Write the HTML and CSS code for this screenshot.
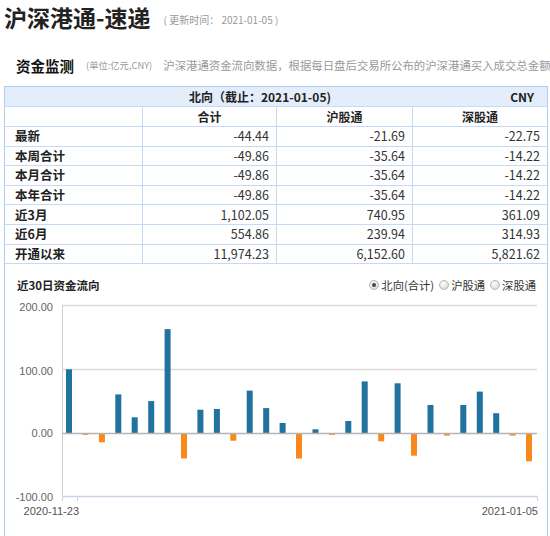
FILE: index.html
```html
<!DOCTYPE html>
<html lang="zh-CN">
<head>
<meta charset="utf-8">
<title>沪深港通-速递</title>
<link rel="stylesheet" href="styles.css">
</head>
<body>
<div class="top">
  <h1 class="title">沪深港通-速递</h1>
  <span class="upd">( 更新时间： 2021-01-05 )</span>
</div>
<div class="sub">
  <span class="sub-title">资金监测</span>
  <span class="unit">(单位:亿元,CNY)</span>
  <span class="desc">沪深港通资金流向数据，根据每日盘后交易所公布的沪深港通买入成交总金额</span>
</div>
<div class="panel">
  <table class="grid">
    <colgroup><col class="c1"><col class="c2"><col class="c3"><col class="c4"></colgroup>
    <tr class="hd1"><th colspan="3" class="north">北向（截止：2021-01-05)</th><th class="cny">CNY</th></tr>
    <tr class="hd2"><th></th><th>合计</th><th>沪股通</th><th>深股通</th></tr>
    <tr><td class="lab">最新</td><td>-44.44</td><td>-21.69</td><td>-22.75</td></tr>
    <tr><td class="lab">本周合计</td><td>-49.86</td><td>-35.64</td><td>-14.22</td></tr>
    <tr><td class="lab">本月合计</td><td>-49.86</td><td>-35.64</td><td>-14.22</td></tr>
    <tr><td class="lab">本年合计</td><td>-49.86</td><td>-35.64</td><td>-14.22</td></tr>
    <tr><td class="lab">近3月</td><td>1,102.05</td><td>740.95</td><td>361.09</td></tr>
    <tr><td class="lab">近6月</td><td>554.86</td><td>239.94</td><td>314.93</td></tr>
    <tr><td class="lab">开通以来</td><td>11,974.23</td><td>6,152.60</td><td>5,821.62</td></tr>
  </table>
  <div class="chart-head">
    <span class="chart-title">近30日资金流向</span>
    <div class="radios">
      <span class="radio"><span class="dot on"></span>北向(合计)</span>
      <span class="radio"><span class="dot"></span>沪股通</span>
      <span class="radio"><span class="dot"></span>深股通</span>
    </div>
  </div>
  <svg class="chart" width="542" height="240" viewBox="0 0 542 240">
    <line class="gl" x1="57" y1="10.5" x2="532" y2="10.5"/>
    <line class="gl" x1="57" y1="74.5" x2="532" y2="74.5"/>
    <line class="yaxis" x1="57.5" y1="10" x2="57.5" y2="206"/>
    <line class="tick" x1="72.5" y1="201" x2="72.5" y2="206"/>
    <line class="tick" x1="532.5" y1="201" x2="532.5" y2="206"/>
    <line class="xaxis" x1="57" y1="201.5" x2="533" y2="201.5"/>
    <text class="yl" x="48" y="16">200.00</text>
    <text class="yl" x="48" y="80">100.00</text>
    <text class="yl" x="48" y="142">0.00</text>
    <text class="yl" x="48" y="206">-100.00</text>
    <text class="xl" x="74" y="220">2020-11-23</text>
    <text class="xl" x="533" y="220">2021-01-05</text>
    <g class="pos">
      <rect x="61" y="74.3" width="6" height="63.7"/>
      <rect x="110.3" y="99.4" width="6" height="38.6"/>
      <rect x="126.7" y="122.3" width="6" height="15.7"/>
      <rect x="143.2" y="106.1" width="6" height="31.9"/>
      <rect x="159.6" y="34.1" width="6" height="103.9"/>
      <rect x="192.4" y="114.7" width="6" height="23.3"/>
      <rect x="208.9" y="114" width="6" height="24"/>
      <rect x="241.7" y="95.6" width="6" height="42.4"/>
      <rect x="258.2" y="113.1" width="6" height="24.9"/>
      <rect x="274.6" y="128" width="6" height="10"/>
      <rect x="307.5" y="134.3" width="6" height="3.7"/>
      <rect x="340.3" y="126" width="6" height="12"/>
      <rect x="356.7" y="86.4" width="6" height="51.6"/>
      <rect x="389.6" y="88.3" width="6" height="49.7"/>
      <rect x="422.5" y="110" width="6" height="28"/>
      <rect x="455.3" y="110" width="6" height="28"/>
      <rect x="471.8" y="96.6" width="6" height="41.4"/>
      <rect x="488.2" y="118.2" width="6" height="19.8"/>
    </g>
    <g class="neg">
      <rect x="77.4" y="138" width="6" height="1.9"/>
      <rect x="93.9" y="138" width="6" height="9.3"/>
      <rect x="176" y="138" width="6" height="25.5"/>
      <rect x="225.3" y="138" width="6" height="7.7"/>
      <rect x="291" y="138" width="6" height="25.5"/>
      <rect x="323.9" y="138" width="6" height="1.9"/>
      <rect x="373.2" y="138" width="6" height="8.3"/>
      <rect x="406" y="138" width="6" height="22.7"/>
      <rect x="438.9" y="138" width="6" height="2.6"/>
      <rect x="504.6" y="138" width="6" height="2.6"/>
      <rect x="521" y="138" width="6" height="28.3"/>
    </g>
    <line class="zero" x1="57" y1="138.5" x2="532" y2="138.5"/>
  </svg>
</div>
</body>
</html>
```

FILE: styles.css
```css
* { box-sizing: border-box; }
html, body { margin: 0; padding: 0; background: #fff; }
body {
  width: 550px;
  overflow: hidden;
  font-family: "Noto Sans CJK SC", "Noto Sans", sans-serif;
  color: #222;
}
.top {
  height: 34px;
  display: flex;
  align-items: center;
  padding-left: 4px;
}
.title {
  margin: 0;
  font-size: 23px;
  font-weight: bold;
  line-height: 34px;
  color: #222;
}
.upd {
  margin-left: 13px;
  margin-top: 5px;
  font-size: 10px;
  color: #999;
  white-space: nowrap;
}
.sub {
  height: 30px;
  margin-top: 16px;
  display: flex;
  align-items: center;
  padding-left: 16px;
  white-space: nowrap;
}
.sub-title {
  font-size: 14.5px;
  font-weight: bold;
  color: #111;
}
.unit {
  margin-left: 12px;
  font-size: 9.3px;
  color: #999;
}
.desc {
  margin-left: 11px;
  font-size: 11.4px;
  color: #999;
}
.panel {
  margin: 6px 0 0 4px;
  width: 544px;
  height: 460px;
  border: 1px solid #b4cdf6;
}
.grid {
  width: 542px;
  table-layout: fixed;
  border-collapse: separate;
  border-spacing: 0;
}
.c1 { width: 138px; }
.c2 { width: 134px; }
.c3 { width: 136px; }
.c4 { width: 134px; }
.grid th, .grid td {
  padding: 0 7px 0 0;
  border-right: 1px solid #c5d9f8;
  border-bottom: 1px solid #c5d9f8;
  white-space: nowrap;
  overflow: hidden;
}
.grid th:last-child, .grid td:last-child { border-right: none; }
.grid th {
  height: 20px;
  font-size: 12px;
  font-weight: bold;
  text-align: center;
  padding: 0;
  line-height: 18px;
}
.hd1 th { background: #e4eefb; border-right: none; }
.hd1 .north { text-align: right; padding-right: 82px; }
.hd1 .cny { text-align: right; padding-right: 13px; }
.grid td {
  height: 19.6px;
  font-size: 12.5px;
  line-height: 18px;
  text-align: right;
  color: #333;
}
.grid td.lab {
  text-align: left;
  padding-left: 10px;
  font-weight: bold;
  color: #222;
}
.chart-head {
  margin-top: 10px;
  height: 22px;
  display: flex;
  align-items: center;
  justify-content: space-between;
  padding: 0 11px 0 12px;
}
.chart-title {
  font-size: 11.5px;
  font-weight: bold;
  color: #222;
}
.radios {
  display: flex;
  align-items: center;
  gap: 5px;
  font-size: 11.3px;
  color: #333;
}
.radio {
  display: flex;
  align-items: center;
  gap: 2px;
}
.dot {
  width: 10px;
  height: 10px;
  border-radius: 50%;
  border: 1px solid #b8b8b8;
  background: radial-gradient(circle at 40% 35%, #ffffff 0%, #e2e2e2 60%, #cfcfcf 100%);
  display: flex;
  align-items: center;
  justify-content: center;
}
.dot.on::after {
  content: "";
  width: 4px;
  height: 4px;
  border-radius: 50%;
  background: #444;
}
.chart { display: block; margin-top: -1px; }
.gl { stroke: #dadada; stroke-width: 1.5; }
.yaxis { stroke: #d0d0d0; stroke-width: 1; }
.tick { stroke: #c8d4e6; stroke-width: 1; }
.xaxis { stroke: #c8d4e6; stroke-width: 1.5; }
.zero { stroke: #b4b4b4; stroke-width: 1.5; }
.yl {
  font-family: "Liberation Sans", Arial, sans-serif;
  font-size: 11px;
  fill: #666;
  text-anchor: end;
}
.xl {
  font-family: "Liberation Sans", Arial, sans-serif;
  font-size: 11px;
  fill: #555;
  text-anchor: end;
}
.pos rect { fill: #21739f; }
.neg rect { fill: #f88a1c; }
```
